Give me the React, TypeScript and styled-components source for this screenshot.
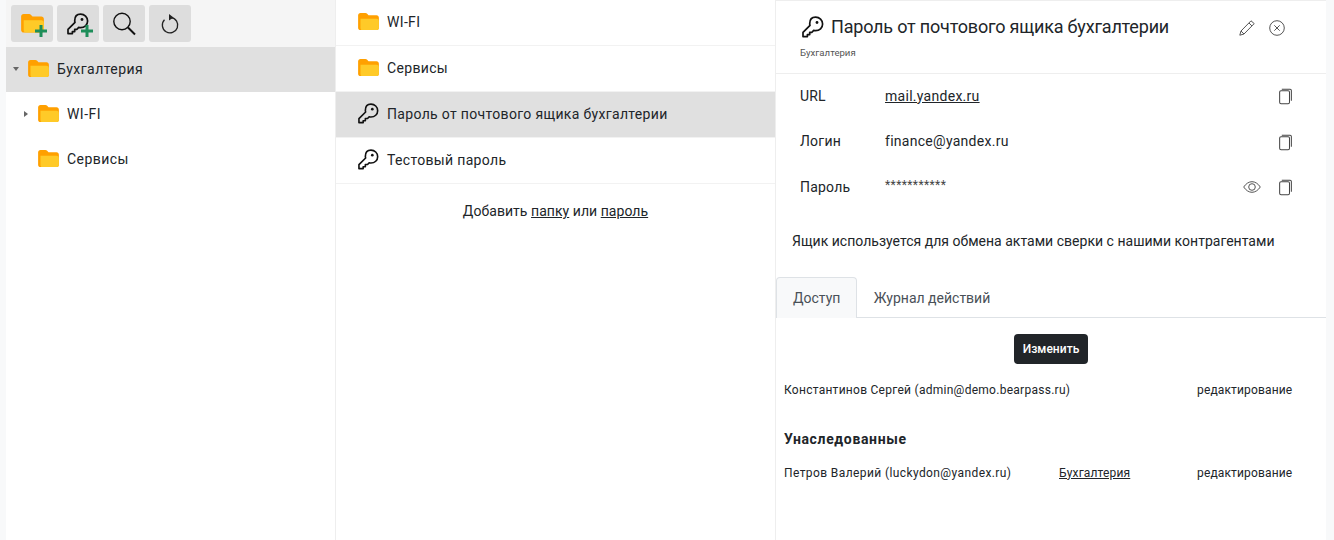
import React from "react";
import styled, { createGlobalStyle } from "styled-components";

const Global = createGlobalStyle`
  html, body { margin: 0; padding: 0; background: #fff; }
  body { font-family: Roboto, "Liberation Sans", sans-serif; color: #212529; font-size: 14px; }
  * { box-sizing: border-box; }
`;

const Page = styled.div`
  width: 1334px; height: 540px; overflow: hidden; display: flex; background: #f8f9fa; padding-left: 6px; padding-right: 8px;
`;
const Sidebar = styled.div`
  width: 330px; background: #fff; border-right: 1px solid #eee; flex: none;
`;
const Toolbar = styled.div`
  height: 47px; background: #f5f5f5; padding: 5px 5px; display: flex; gap: 4px; align-items: flex-start;
`;
const ToolButton = styled.div`
  width: 42px; height: 37px; border-radius: 3px; background: #ddd; display: flex; align-items: center; justify-content: center;
`;
const TreeRow = styled.div<{ $active?: boolean; $indent: number }>`
  height: 45px; display: flex; align-items: center; padding: 0 0 2px ${p => p.$indent}px;
  background: ${p => (p.$active ? "#e0e0e0" : "#fff")};
`;
const Caret = styled.span<{ $down?: boolean }>`
  width: 12px; height: 6px; margin-right: 6px; display: flex; align-items: center; justify-content: center; flex: none;
  &::before {
    content: ""; display: block; border-style: solid;
    ${p => p.$down
      ? "border-width: 4px 3px 0 3px; border-color: #666 transparent transparent transparent;"
      : "border-width: 3px 0 3px 4px; border-color: transparent transparent transparent #666;"}
  }
`;
const Label = styled.span<{ $tree?: boolean }>`
  font-size: 14px; letter-spacing: ${p => (p.$tree ? "0.45px" : "0.33px")}; color: #212529; margin-left: 8px; white-space: nowrap;
`;
const Middle = styled.div`
  width: 440px; background: #fff; border-right: 1px solid #eee; flex: none; 
`;
const ListRow = styled.div<{ $active?: boolean }>`
  height: 46px; display: flex; align-items: center; padding: 0 0 2px 22px; border-bottom: 1px solid #f2f2f2;
  background: ${p => (p.$active ? "#e0e0e0" : "#fff")};
`;
const AddLine = styled.div`
  text-align: center; margin-top: 18px; font-size: 14px; letter-spacing: 0.05px; line-height: 18px;
`;
const A = styled.span`
  color: #212529; text-decoration: underline;
`;
const Detail = styled.div`
  flex: 1; background: #fff; display: flex; flex-direction: column;
`;
const Head = styled.div`
  height: 74px; border-top: 1px solid #eee; border-bottom: 1px solid #eee; padding: 12px 41px 0 24px; display: flex; justify-content: space-between;
`;
const HeadMain = styled.div`
  display: flex; flex-direction: column;
`;
const TitleLine = styled.div`
  display: flex; align-items: center; gap: 7px; height: 27px; padding-left: 2px;
`;
const Title = styled.span`
  font-size: 18px; letter-spacing: -0.19px; color: #212529; white-space: nowrap;
`;
const Sub = styled.div`
  font-size: 9.6px; color: #555; margin-top: 7px; line-height: 12px;
`;
const HeadIcons = styled.div`
  display: flex; gap: 14px; align-items: center; height: 27px; margin-top: 1px;
`;
const Field = styled.div`
  display: flex; align-items: center; height: 45.5px; padding: 0 34px 0 24px;
`;
const FieldName = styled.div`
  width: 85px; font-size: 14px; letter-spacing: 0.2px; flex: none;
`;
const FieldValue = styled.div`
  flex: 1; font-size: 14px; letter-spacing: 0.28px; white-space: nowrap;
`;
const Stars = styled.div`
  flex: 1; font-size: 12px; letter-spacing: 0.4px; white-space: nowrap; color: #444; margin-bottom: 3px;
`;
const FieldIcons = styled.div`
  display: flex; align-items: center; gap: 18px;
`;
const Fields = styled.div`
  margin-top: -1px;
`;
const Note = styled.div`
  padding-left: 16px; margin-top: 21px; height: 46px; font-size: 14px; letter-spacing: 0.02px; line-height: 20px;
`;
const Tabs = styled.div`
  display: flex; border-bottom: 1px solid #dee2e6; height: 41px;
`;
const Tab = styled.div<{ $active?: boolean }>`
  height: 41px; padding: 0 ${p => (p.$active ? 15.5 : 16)}px 0 16px; display: flex; align-items: center; font-size: 14px; letter-spacing: 0; color: #495057;
  border: 1px solid ${p => (p.$active ? "#dee2e6" : "transparent")}; border-bottom: none;
  border-radius: 4px 4px 0 0; background: ${p => (p.$active ? "#f8f9fa" : "transparent")};
`;
const ButtonRow = styled.div`
  display: flex; justify-content: center; padding-top: 16px;
`;
const Button = styled.div`
  width: 74px; height: 30px; background: #212529; color: #fff; font-size: 12px; font-weight: 500; letter-spacing: 0.05px; border-radius: 4px;
  display: flex; align-items: center; justify-content: center;
`;
const AccessRow = styled.div<{ $first?: boolean }>`
  display: grid; grid-template-columns: 275px 138px auto; padding-left: 8px; font-size: 12px; letter-spacing: 0.15px; line-height: 16px;
  white-space: nowrap; margin-top: ${p => (p.$first ? 18 : 0)}px;
`;
const Person = styled.span<{ $tight?: boolean }>`
  letter-spacing: ${p => (p.$tight ? 0.27 : 0.4)}px;
`;
const H = styled.div`
  font-size: 14px; font-weight: 700; letter-spacing: 0.65px; padding-left: 8px; margin-top: 32px; line-height: 18px; margin-bottom: 17px;
`;
const IconWrap = styled.span`
  position: relative; display: inline-flex; width: 28px; height: 24px; align-items: center; padding-left: 3px;
`;
const PlusMark = styled.svg`
  position: absolute; right: -1px; bottom: -1px;
`;
const CopyIcon = styled.svg`
  margin-top: 2px;
`;

const Folder = ({ s = 21 }: { s?: number }) => (
  <svg width={s} height={(s * 17) / 21} viewBox="0 0 22 18">
    <path d="M0 2.500C0 1 1 0 2.500 0h5.200c.8 0 1.400.3 1.900.9L11 2.500h8.500C21 2.500 22 3.500 22 5v10.500c0 1.400-1 2.500-2.500 2.500h-17C1 18 0 17 0 15.500z" fill="#ffa000" />
    <path d="M2.500 6h17C21 6 22 7 22 8.500v7c0 1.400-1 2.500-2.500 2.500H4.500C3 18 2.500 17 2.500 15.500z" fill="#ffca28" />
  </svg>
);
const Key = ({ s = 21 }: { s?: number }) => (
  <svg width={s} height={s} viewBox="0 0 22 22" fill="none" stroke="#111" strokeWidth="1.700" strokeLinejoin="round">
    <path d="M13.600 1.200c3.900 0 7 3 7 6.900s-3.100 6.600-7 6.600c-.7 0-1.300-.1-1.900-.3l-1.700 1.900H7.700v2.300H5.400v2H1V16.400l7-7c-.2-.6-.3-1-.3-1.600C7.700 4 9.800 1.200 13.600 1.200z" />
    <circle cx="15" cy="6.500" r="1.400" fill="#111" stroke="none" />
  </svg>
);
const Plus = () => (
  <PlusMark width="12" height="12" viewBox="0 0 12 12">
    <path d="M4.500 0h3v4.500H12v3H7.500V12h-3V7.500H0v-3h4.500z" fill="#1e8e5a" />
  </PlusMark>
);
const Search = () => (
  <svg width="26" height="26" viewBox="0 0 26 26" fill="none" stroke="#111">
    <circle cx="11" cy="10.500" r="8.200" strokeWidth="1.400" />
    <path d="M17 16.500l7 7" strokeWidth="2" />
  </svg>
);
const Refresh = () => (
  <svg width="20" height="22" viewBox="0 0 20 22" fill="none" stroke="#222">
    <path d="M11 4.500a7.700 7.700 0 1 1-6.500 2.300" strokeWidth="1.300" />
    <path d="M9 1l4.500 3.500L9 7.500z" fill="#222" stroke="none" />
  </svg>
);
const Copy = () => (
  <CopyIcon width="13" height="17" viewBox="0 0 14 17" fill="none" stroke="#444" strokeWidth="1.100">
    <path d="M3 .7h9a1.300 1.300 0 0 1 1.300 1.300v11" />
    <rect x=".7" y="2.200" width="10.600" height="14" rx="1.500" />
  </CopyIcon>
);
const Pencil = () => (
  <svg width="16" height="16" viewBox="0 0 16 16" fill="none" stroke="#555" strokeWidth="1">
    <path d="M12 .8l3.200 2.800L5 14 .8 15.200 2 11z" />
    <path d="M10 3l3 3M2 11l3 3" />
  </svg>
);
const XCircle = () => (
  <svg width="16" height="16" viewBox="0 0 16 16" fill="none" stroke="#555" strokeWidth="1">
    <circle cx="8" cy="8" r="7.300" />
    <path d="M5.300 5.300l5.400 5.400M10.700 5.300l-5.400 5.400" />
  </svg>
);
const Eye = () => (
  <svg width="18" height="12" viewBox="0 0 18 12" fill="none" stroke="#555" strokeWidth="1">
    <path d="M.7 6C3 2.500 6 .7 9 .7s6 1.800 8.300 5.300C15 9.500 12 11.300 9 11.300S3 9.500.7 6z" />
    <circle cx="9" cy="6" r="3.300" />
  </svg>
);

export default function App() {
  return (
    <Page>
      <Global />
      <Sidebar>
        <Toolbar>
          <ToolButton><IconWrap><Folder s={23} /><Plus /></IconWrap></ToolButton>
          <ToolButton><IconWrap><Key s={22} /><Plus /></IconWrap></ToolButton>
          <ToolButton><Search /></ToolButton>
          <ToolButton><Refresh /></ToolButton>
        </Toolbar>
        <TreeRow $active $indent={4}><Caret $down /><Folder /><Label $tree>Бухгалтерия</Label></TreeRow>
        <TreeRow $indent={14}><Caret /><Folder /><Label $tree>WI-FI</Label></TreeRow>
        <TreeRow $indent={32}><Folder /><Label $tree>Сервисы</Label></TreeRow>
      </Sidebar>
      <Middle>
        <ListRow><Folder /><Label>WI-FI</Label></ListRow>
        <ListRow><Folder /><Label>Сервисы</Label></ListRow>
        <ListRow $active><Key /><Label>Пароль от почтового ящика бухгалтерии</Label></ListRow>
        <ListRow><Key /><Label>Тестовый пароль</Label></ListRow>
        <AddLine>Добавить <A>папку</A> или <A>пароль</A></AddLine>
      </Middle>
      <Detail>
        <Head>
          <HeadMain>
            <TitleLine><Key s={22} /><Title>Пароль от почтового ящика бухгалтерии</Title></TitleLine>
            <Sub>Бухгалтерия</Sub>
          </HeadMain>
          <HeadIcons><Pencil /><XCircle /></HeadIcons>
        </Head>
        <Fields>
          <Field><FieldName>URL</FieldName><FieldValue><A>mail.yandex.ru</A></FieldValue><FieldIcons><Copy /></FieldIcons></Field>
          <Field><FieldName>Логин</FieldName><FieldValue>finance@yandex.ru</FieldValue><FieldIcons><Copy /></FieldIcons></Field>
          <Field><FieldName>Пароль</FieldName><Stars>***********</Stars><FieldIcons><Eye /><Copy /></FieldIcons></Field>
        </Fields>
        <Note>Ящик используется для обмена актами сверки с нашими контрагентами</Note>
        <Tabs>
          <Tab $active>Доступ</Tab>
          <Tab>Журнал действий</Tab>
        </Tabs>
        <ButtonRow><Button>Изменить</Button></ButtonRow>
        <AccessRow $first><Person $tight>Константинов Сергей (admin@demo.bearpass.ru)</Person><span /><span>редактирование</span></AccessRow>
        <H>Унаследованные</H>
        <AccessRow><Person>Петров Валерий (luckydon@yandex.ru)</Person><A>Бухгалтерия</A><span>редактирование</span></AccessRow>
      </Detail>
    </Page>
  );
}
